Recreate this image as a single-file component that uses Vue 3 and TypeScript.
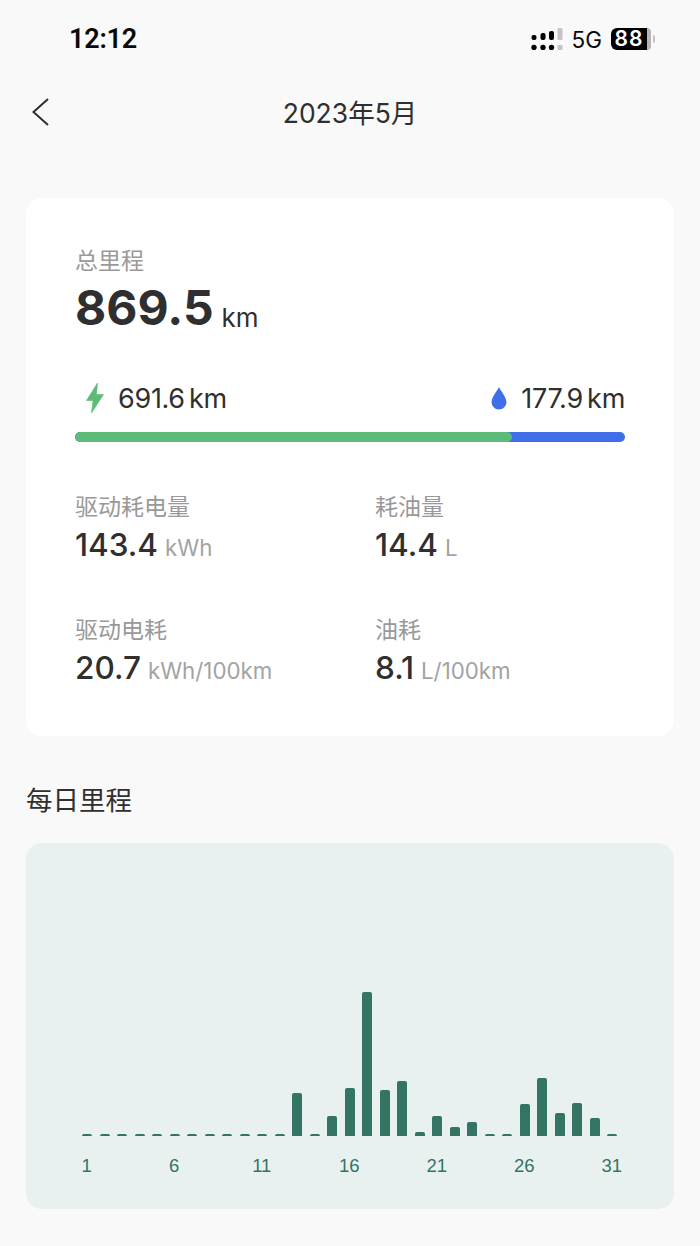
<script setup lang="ts">
const heights: number[] = [2,2,2,2,2,2,2,2,2,2,2,2,43,2,20,48,144,46,55,4,20,9,14,2,2,32,58,23,33,18,2];
const labels: string[] = ['1','6','11','16','21','26','31'];
</script>

<template>
  <div class="page">
    <div class="status">
      <span class="time">12:12</span>
      <div class="status-right">
        <svg class="signal" width="32" height="22" viewBox="0 0 32 22">
          <g fill="#000">
            <rect x="0.500" y="7" width="5" height="5" rx="2"/>
            <rect x="9.500" y="5" width="5" height="7" rx="2"/>
            <rect x="18" y="3" width="5" height="9" rx="2"/>
            <circle cx="3" cy="19.500" r="2.700"/>
            <circle cx="12" cy="19.500" r="2.700"/>
            <circle cx="20.500" cy="19.500" r="2.700"/>
          </g>
          <rect x="26.500" y="0" width="5" height="12" rx="1.500" fill="#c4c4c4"/>
          <rect x="26.500" y="17" width="5" height="5" rx="1" fill="#c4c4c4"/>
        </svg>
        <span class="net">5G</span>
        <div class="battery">
          <span class="battery-level">88</span>
          <span class="battery-rest"></span>
          <span class="battery-tip"></span>
        </div>
      </div>
    </div>

    <div class="nav">
      <svg class="back" width="22" height="30" viewBox="0 0 22 30">
        <path d="M18 2 L3.500 15 L18 28" fill="none" stroke="#2f2f2f" stroke-width="2"/>
      </svg>
      <span class="nav-title">2023年5月</span>
    </div>

    <section class="summary">
      <div class="total-label">总里程</div>
      <div class="total"><span class="total-num">869.5</span><span class="total-unit">km</span></div>

      <div class="split">
        <div class="split-item">
          <svg width="20" height="32" viewBox="0 0 20 32">
            <path d="M12.500 1 L1.500 18.500 H8 L6.500 31 L18.500 12.500 H11.500 Z" fill="#5dbb74" stroke="#5dbb74" stroke-width="0.600" stroke-linejoin="round"/>
          </svg>
          <span>691.6 km</span>
        </div>
        <div class="split-item fuel">
          <svg width="16" height="24" viewBox="0 0 16 24">
            <path d="M8 1 C6.500 5 0.600 10.500 0.600 16 C0.600 20.200 3.900 23.500 8 23.500 C12.100 23.500 15.400 20.200 15.400 16 C15.400 10.500 9.500 5 8 1 Z" fill="#3f6fe8"/>
          </svg>
          <span>177.9 km</span>
        </div>
      </div>
      <div class="bar"><div class="bar-ev"></div></div>

      <div class="stats">
        <div class="stat">
          <div class="stat-label">驱动耗电量</div>
          <div class="stat-value"><b>143.4</b><span>kWh</span></div>
        </div>
        <div class="stat">
          <div class="stat-label">耗油量</div>
          <div class="stat-value"><b>14.4</b><span>L</span></div>
        </div>
        <div class="stat">
          <div class="stat-label">驱动电耗</div>
          <div class="stat-value"><b>20.7</b><span>kWh/100km</span></div>
        </div>
        <div class="stat">
          <div class="stat-label">油耗</div>
          <div class="stat-value"><b>8.1</b><span>L/100km</span></div>
        </div>
      </div>
    </section>

    <h2 class="section-title">每日里程</h2>

    <section class="chart">
      <div class="bars">
        <div v-for="(h, i) in heights" :key="i" class="col">
          <div class="daybar" :style="{ height: h + 'px' }"></div>
        </div>
      </div>
      <div class="axis">
        <span v-for="l in labels" :key="l" class="tick">{{ l }}</span>
      </div>
    </section>
  </div>
</template>

<style scoped>
.page {
  width: 700px;
  height: 1246px;
  box-sizing: border-box;
  background: #f9f9f9;
  padding: 0 26px;
  overflow: hidden;
  font-family: Inter, "Noto Sans CJK SC", sans-serif;
  color: #2f2f2f;
}
.status {
  height: 80px;
  box-sizing: border-box;
  margin: 0 -26px;
  padding: 0 44px 2px 69px;
  display: flex;
  align-items: center;
  justify-content: space-between;
}
.time {
  font-family: Roboto, sans-serif;
  font-size: 27px;
  font-weight: 600;
  color: #0a0a0a;
  letter-spacing: -0.200px;
}
.status-right {
  display: flex;
  align-items: center;
}
.signal {
  margin-right: 9px;
}
.net {
  font-family: Inter, sans-serif;
  font-size: 22.500px;
  color: #0a0a0a;
  margin-right: 9px;
}
.battery {
  display: flex;
  align-items: center;
  width: 45px;
  height: 22px;
}
.battery-level {
  width: 36px;
  height: 22px;
  background: #000;
  color: #fff;
  border-radius: 6px 0 0 6px;
  font-size: 21px;
  font-weight: 600;
  line-height: 22px;
  text-align: center;
  letter-spacing: 1px;
}
.battery-rest {
  width: 4px;
  height: 22px;
  background: #b5b5b5;
  border-radius: 0 6px 6px 0;
}
.battery-tip {
  width: 2px;
  height: 8px;
  margin-left: 2px;
  background: #c4c4c4;
  border-radius: 0 2px 2px 0;
}
.nav {
  position: relative;
  height: 66px;
  display: flex;
  align-items: center;
  justify-content: center;
}
.back {
  position: absolute;
  left: 4px;
  top: 17px;
}
.nav-title {
  font-size: 26.500px;
  line-height: 66px;
}
.summary {
  margin-top: 52px;
  height: 538px;
  box-sizing: border-box;
  background: #fff;
  border-radius: 16px;
  padding: 48px 49px 0 49px;
}
.total-label {
  font-size: 23px;
  line-height: 30px;
  color: #999;
}
.total {
  display: flex;
  align-items: baseline;
  height: 56px;
  margin-top: 4px;
}
.total-num {
  font-size: 48px;
  line-height: 56px;
  font-weight: 700;
}
.total-unit {
  font-size: 26px;
  margin-left: 8px;
  position: relative;
  top: 2px;
}
.split {
  margin-top: 42px;
  height: 40px;
  display: flex;
  justify-content: space-between;
  align-items: center;
}
.split-item {
  display: flex;
  align-items: center;
  gap: 13px;
  margin-left: 10px;
  font-size: 27px;
  letter-spacing: -0.300px;
  word-spacing: -3px;
}
.split-item.fuel {
  margin-left: 0;
  gap: 14px;
}
.bar {
  margin-top: 14px;
  height: 10px;
  border-radius: 5px;
  background: #3f6fe8;
  overflow: hidden;
}
.bar-ev {
  width: 437px;
  height: 10px;
  border-radius: 5px;
  background: #5dbb7a;
}
.stats {
  margin-top: 50px;
  display: grid;
  grid-template-columns: 300px 1fr;
  row-gap: 50px;
}
.stat-label {
  font-size: 23px;
  line-height: 30px;
  color: #999;
}
.stat-value {
  display: flex;
  align-items: baseline;
  height: 40px;
  margin-top: 3px;
}
.stat-value b {
  font-size: 31.500px;
  line-height: 40px;
  font-weight: 500;
}
.stat-value span {
  font-size: 22.300px;
  color: #a3a3a3;
  margin-left: 7px;
}
.section-title {
  margin: 47px 0 0;
  font-size: 26.500px;
  line-height: 34px;
  font-weight: 400;
}
.chart {
  margin-top: 26px;
  height: 366px;
  box-sizing: border-box;
  background: #e9f1f0;
  border-radius: 16px;
  padding: 0 0 0 52.500px;
  display: flex;
  flex-direction: column;
}
.bars {
  height: 293px;
  display: flex;
  align-items: flex-end;
}
.col {
  width: 17.500px;
  flex: none;
  display: flex;
  justify-content: center;
}
.daybar {
  width: 10px;
  background: #337465;
  border-radius: 2px 2px 0 0;
}
.axis {
  margin: 17px 0 0 -35.500px;
  display: flex;
}
.tick {
  width: 87.500px;
  flex: none;
  text-align: center;
  font-family: "Liberation Sans", sans-serif;
  font-size: 18.500px;
  line-height: 26px;
  color: #337465;
}
</style>
